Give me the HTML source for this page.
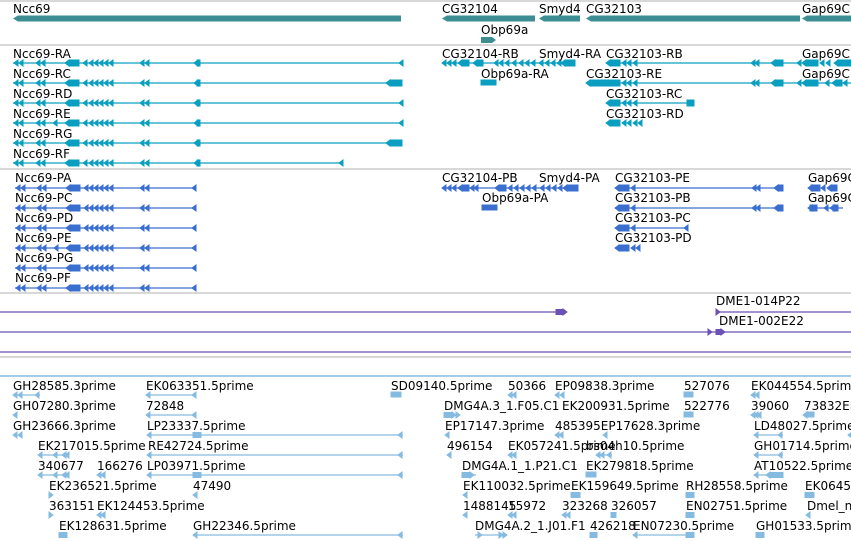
<!DOCTYPE html>
<html><head><meta charset="utf-8"><style>
html,body{margin:0;padding:0;background:#fff;width:851px;height:541px;overflow:hidden}
svg{display:block}
text{font-family:"DejaVu Sans","Liberation Sans",sans-serif;font-size:12px;fill:#000}
</style></head><body>
<svg width="851" height="541" viewBox="0 0 851 541">
<defs>
<polygon id="L" points="0,0 4,-3 4,3"/>
<polygon id="R" points="4,0 0,-3 0,3"/>
<g id="ncc">
<line x1="13" y1="0" x2="402" y2="0" stroke-width="1.2"/>
<use href="#L" x="14"/><use href="#L" x="19"/><use href="#L" x="36"/><use href="#L" x="41"/>
<use href="#L" x="65"/><rect x="69" y="-3" width="10" height="6"/>
<use href="#L" x="83"/><use href="#L" x="89"/><use href="#L" x="94"/><use href="#L" x="99"/><use href="#L" x="104"/><use href="#L" x="109"/>
<use href="#L" x="140"/><use href="#L" x="145"/>
<use href="#L" x="194"/><rect x="197" y="-3" width="3" height="6"/>
</g>
<g id="nccp">
<line x1="15" y1="0" x2="196" y2="0" stroke-width="1.2"/>
<use href="#L" x="16"/><use href="#L" x="21"/><use href="#L" x="37"/><use href="#L" x="42"/>
<use href="#L" x="66"/><rect x="70" y="-3" width="10" height="6"/>
<use href="#L" x="84"/><use href="#L" x="89"/><use href="#L" x="94"/><use href="#L" x="99"/><use href="#L" x="104"/><use href="#L" x="109"/>
<use href="#L" x="140"/><use href="#L" x="145"/>
<use href="#L" x="192"/>
</g>
</defs>
<g stroke="#c0c0c0" stroke-width="1.2">
<line x1="0" y1="1" x2="851" y2="1"/><line x1="0" y1="45" x2="851" y2="45"/>
<line x1="0" y1="169" x2="851" y2="169"/><line x1="0" y1="293" x2="851" y2="293"/>
<line x1="0" y1="357" x2="851" y2="357"/>
</g>
<line x1="0" y1="376" x2="851" y2="376" stroke="#86bbe1" stroke-width="1.5"/>

<g fill="#3d8e93">
<polygon points="13,18.5 18,15.5 401,15.5 401,21.5 18,21.5"/>
<polygon points="442,18.5 447,15.5 535,15.5 535,21.5 447,21.5"/>
<polygon points="539,18.5 544,15.5 580,15.5 580,21.5 544,21.5"/>
<polygon points="586,18.5 591,15.5 800,15.5 800,21.5 591,21.5"/>
<polygon points="802,18.5 807,15.5 851,15.5 851,21.5 807,21.5"/>
<polygon points="481,37 492,37 496,40 492,43 481,43"/>
</g>
<text x="13" y="13">Ncc69</text><text x="442" y="13">CG32104</text><text x="539" y="13">Smyd4</text><text x="586" y="13">CG32103</text><text x="802" y="13">Gap69C</text>
<text x="481" y="34">Obp69a</text>

<g fill="#0a9fc0" stroke="#0a9fc0">
<use href="#ncc" y="63"/><use href="#L" x="399" y="63"/>
<use href="#ncc" y="83"/><rect x="390" y="80" width="12" height="6"/><use href="#L" x="386" y="83"/>
<use href="#ncc" y="103"/><use href="#L" x="399" y="103"/>
<use href="#ncc" y="123"/><use href="#L" x="399" y="123"/><use href="#L" x="53" y="123"/>
<use href="#ncc" y="143"/><rect x="390" y="140" width="12" height="6"/><use href="#L" x="386" y="143"/>
<g><line x1="13" y1="163" x2="343" y2="163" stroke-width="1.2"/>
<use href="#L" x="14" y="163"/><use href="#L" x="19" y="163"/><use href="#L" x="36" y="163"/><use href="#L" x="41" y="163"/><use href="#L" x="65" y="163"/><rect x="69" y="160" width="10" height="6"/><use href="#L" x="83" y="163"/><use href="#L" x="89" y="163"/><use href="#L" x="94" y="163"/><use href="#L" x="99" y="163"/><use href="#L" x="104" y="163"/><use href="#L" x="109" y="163"/><use href="#L" x="140" y="163"/><use href="#L" x="145" y="163"/><use href="#L" x="194" y="163"/><rect x="197" y="160" width="3" height="6"/><use href="#L" x="339" y="163"/></g>
<line x1="442" y1="63" x2="575" y2="63" stroke-width="1.2"/>
<use href="#L" x="442" y="63"/><use href="#L" x="447" y="63"/><use href="#L" x="452" y="63"/><rect x="462" y="60" width="7" height="6"/><use href="#L" x="458" y="63"/><rect x="477" y="60" width="6" height="6"/><use href="#L" x="473" y="63"/>
<use href="#L" x="494" y="63"/><use href="#L" x="499" y="63"/><use href="#L" x="505" y="63"/><use href="#L" x="512" y="63"/><use href="#L" x="519" y="63"/><use href="#L" x="525" y="63"/><use href="#L" x="531" y="63"/>
<use href="#L" x="539" y="63"/><use href="#L" x="545" y="63"/><use href="#L" x="551" y="63"/><use href="#L" x="557" y="63"/><rect x="565" y="60" width="10" height="6"/><use href="#L" x="561" y="63"/>
<rect x="481" y="80" width="15" height="5"/>
<line x1="606" y1="63" x2="800" y2="63" stroke-width="1.2"/>
<rect x="610" y="60" width="10" height="6"/><use href="#L" x="606" y="63"/><use href="#L" x="622" y="63"/><use href="#L" x="627" y="63"/><use href="#L" x="633" y="63"/>
<use href="#L" x="751" y="63"/><use href="#L" x="755" y="63"/><rect x="775" y="60" width="8" height="6"/><use href="#L" x="771" y="63"/><use href="#L" x="797" y="63"/>
<rect x="806" y="60" width="12" height="6"/><use href="#L" x="802" y="63"/><use href="#L" x="820" y="63"/><use href="#L" x="826" y="63"/><use href="#L" x="834" y="63"/><rect x="838" y="60" width="13" height="6"/>
<line x1="586" y1="83" x2="851" y2="83" stroke-width="1.2"/>
<rect x="590" y="80" width="30" height="6"/><use href="#L" x="586" y="83"/><use href="#L" x="622" y="83"/><use href="#L" x="627" y="83"/><use href="#L" x="633" y="83"/>
<use href="#L" x="751" y="83"/><use href="#L" x="755" y="83"/><rect x="775" y="80" width="8" height="6"/><use href="#L" x="771" y="83"/><use href="#L" x="797" y="83"/>
<rect x="806" y="80" width="12" height="6"/><use href="#L" x="802" y="83"/><use href="#L" x="825" y="83"/><use href="#L" x="832" y="83"/><rect x="836" y="80" width="6" height="6"/><use href="#L" x="843" y="83"/>
<line x1="606" y1="103" x2="693" y2="103" stroke-width="1.2"/>
<rect x="610" y="100" width="10" height="6"/><use href="#L" x="606" y="103"/><use href="#L" x="622" y="103"/><use href="#L" x="627" y="103"/><use href="#L" x="633" y="103"/><rect x="687" y="100" width="7" height="6"/>
<rect x="610" y="120" width="10" height="6"/><use href="#L" x="606" y="123"/><use href="#L" x="622" y="123"/><use href="#L" x="627" y="123"/><use href="#L" x="633" y="123"/><use href="#L" x="638" y="123"/>
</g>
<g>
<text x="13" y="58">Ncc69-RA</text><text x="13" y="78">Ncc69-RC</text><text x="13" y="98">Ncc69-RD</text><text x="13" y="118">Ncc69-RE</text><text x="13" y="138">Ncc69-RG</text><text x="13" y="158">Ncc69-RF</text>
<text x="442" y="58">CG32104-RB</text><text x="539" y="58">Smyd4-RA</text><text x="606" y="58">CG32103-RB</text><text x="802" y="58">Gap69C</text>
<text x="481" y="78">Obp69a-RA</text><text x="586" y="78">CG32103-RE</text><text x="802" y="78">Gap69C</text>
<text x="606" y="98">CG32103-RC</text><text x="606" y="118">CG32103-RD</text>
</g>

<g fill="#3a6fd0" stroke="#3a6fd0">
<use href="#nccp" y="188"/><use href="#nccp" y="208"/><use href="#nccp" y="228"/><use href="#nccp" y="248"/><use href="#L" x="54" y="248"/><use href="#nccp" y="268"/><use href="#nccp" y="288"/>
<line x1="442" y1="188" x2="578" y2="188" stroke-width="1.2"/>
<use href="#L" x="442" y="188"/><use href="#L" x="447" y="188"/><use href="#L" x="452" y="188"/><rect x="462" y="185" width="7" height="6"/><use href="#L" x="458" y="188"/><use href="#L" x="470" y="188"/><use href="#L" x="474" y="188"/>
<use href="#L" x="495" y="188"/><rect x="500" y="185" width="6" height="6"/><use href="#L" x="508" y="188"/><use href="#L" x="514" y="188"/><use href="#L" x="520" y="188"/><use href="#L" x="526" y="188"/><use href="#L" x="532" y="188"/>
<use href="#L" x="540" y="188"/><use href="#L" x="546" y="188"/><use href="#L" x="552" y="188"/><use href="#L" x="558" y="188"/><rect x="567" y="185" width="11" height="6"/><use href="#L" x="563" y="188"/>
<rect x="482" y="205" width="15" height="5"/>
<line x1="615" y1="188" x2="783" y2="188" stroke-width="1.2"/><line x1="615" y1="208" x2="783" y2="208" stroke-width="1.2"/>
<rect x="620" y="185" width="9" height="6"/><use href="#L" x="615" y="188"/><use href="#L" x="631" y="188"/><use href="#L" x="752" y="188"/><use href="#L" x="756" y="188"/><rect x="778" y="185" width="5" height="6"/><use href="#L" x="774" y="188"/>
<rect x="620" y="205" width="9" height="6"/><use href="#L" x="615" y="208"/><use href="#L" x="631" y="208"/><use href="#L" x="752" y="208"/><use href="#L" x="756" y="208"/><rect x="778" y="205" width="5" height="6"/><use href="#L" x="774" y="208"/>
<line x1="615" y1="228" x2="688" y2="228" stroke-width="1.2"/>
<rect x="620" y="225" width="9" height="6"/><use href="#L" x="615" y="228"/><use href="#L" x="631" y="228"/><use href="#L" x="684" y="228"/>
<rect x="620" y="245" width="9" height="6"/><use href="#L" x="615" y="248"/><use href="#L" x="631" y="248"/><use href="#L" x="636" y="248"/>
<rect x="811" y="185" width="9" height="6"/><use href="#L" x="808" y="188"/><use href="#L" x="821" y="188"/><use href="#L" x="827" y="188"/><rect x="831" y="185" width="6" height="6"/>
<line x1="808" y1="208" x2="843" y2="208" stroke-width="1.2"/><rect x="810" y="205" width="7" height="6"/><use href="#L" x="808" y="208"/><use href="#L" x="824" y="208"/><use href="#L" x="830" y="208"/><rect x="833" y="205" width="5" height="6"/>
</g>
<g>
<text x="15" y="182">Ncc69-PA</text><text x="15" y="202">Ncc69-PC</text><text x="15" y="222">Ncc69-PD</text><text x="15" y="242">Ncc69-PE</text><text x="15" y="262">Ncc69-PG</text><text x="15" y="282">Ncc69-PF</text>
<text x="442" y="182">CG32104-PB</text><text x="539" y="182">Smyd4-PA</text><text x="615" y="182">CG32103-PE</text><text x="808" y="182">Gap69C</text>
<text x="482" y="202">Obp69a-PA</text><text x="615" y="202">CG32103-PB</text><text x="808" y="202">Gap69C</text>
<text x="615" y="222">CG32103-PC</text><text x="615" y="242">CG32103-PD</text>
</g>

<g fill="#6b50b5" stroke="#6b50b5">
<line x1="0" y1="312" x2="560" y2="312" stroke-width="1.3"/><rect x="556" y="309.5" width="7" height="5"/><use href="#R" x="563" y="312"/>
<line x1="717" y1="312" x2="851" y2="312" stroke-width="1.3"/><use href="#R" x="716" y="312"/>
<line x1="0" y1="332" x2="851" y2="332" stroke-width="1.3"/><use href="#R" x="708" y="332"/><rect x="716" y="329.5" width="5" height="5"/><use href="#R" x="721" y="332"/>
<line x1="0" y1="352" x2="851" y2="352" stroke-width="1.3"/>
</g>
<text x="716" y="305">DME1-014P22</text><text x="719" y="325">DME1-002E22</text>

<g fill="#86bbe1" stroke="#86bbe1">
<g stroke-width="1.2">
<line x1="13" y1="395" x2="40" y2="395"/><line x1="146" y1="395" x2="196" y2="395"/>
<line x1="146" y1="415" x2="196" y2="415"/><line x1="444" y1="415" x2="458" y2="415"/>
<line x1="147" y1="435" x2="403" y2="435"/><line x1="754" y1="435" x2="783" y2="435"/>
<line x1="38" y1="455" x2="68" y2="455"/><line x1="147" y1="455" x2="403" y2="455"/><line x1="596" y1="455" x2="612" y2="455"/><line x1="754" y1="455" x2="783" y2="455"/>
<line x1="38" y1="475" x2="68" y2="475"/><line x1="147" y1="475" x2="403" y2="475"/><line x1="462" y1="475" x2="476" y2="475"/><line x1="754" y1="475" x2="783" y2="475"/>
<line x1="193" y1="535" x2="403" y2="535"/><line x1="475" y1="535" x2="507" y2="535"/><line x1="633" y1="535" x2="693" y2="535"/>
</g>
<use href="#L" x="13" y="395"/><use href="#L" x="18" y="395"/><use href="#L" x="35" y="395"/><use href="#L" x="146" y="395"/><use href="#L" x="192" y="395"/><rect x="391" y="392" width="10" height="5"/><use href="#L" x="508" y="395"/><use href="#L" x="512" y="395"/><use href="#L" x="555" y="395"/><use href="#L" x="560" y="395"/><rect x="684" y="392" width="9" height="5"/><use href="#L" x="751" y="395"/><use href="#L" x="755" y="395"/>
<use href="#L" x="13" y="415"/><use href="#L" x="146" y="415"/><use href="#L" x="192" y="415"/><rect x="444" y="412.5" width="8" height="5"/><use href="#R" x="452" y="415"/><use href="#R" x="456" y="415"/><rect x="684" y="412" width="9" height="5"/><use href="#L" x="751" y="415"/><use href="#L" x="754" y="415"/><use href="#L" x="757" y="415"/><rect x="806" y="412" width="8" height="5"/><use href="#L" x="803" y="415"/>
<use href="#L" x="13" y="435"/><use href="#L" x="18" y="435"/><use href="#L" x="147" y="435"/><rect x="193" y="432.5" width="8" height="5"/><use href="#L" x="398" y="435"/><use href="#L" x="445" y="435"/><use href="#L" x="555" y="435"/><use href="#L" x="559" y="435"/><use href="#L" x="603" y="435"/><use href="#L" x="754" y="435"/><use href="#L" x="778" y="435"/><use href="#L" x="848" y="435"/>
<use href="#L" x="38" y="455"/><use href="#L" x="53" y="455"/><use href="#L" x="62" y="455"/><use href="#L" x="65" y="455"/><use href="#L" x="147" y="455"/><use href="#L" x="398" y="455"/><use href="#L" x="447" y="455"/><use href="#L" x="508" y="455"/><use href="#L" x="512" y="455"/><use href="#L" x="596" y="455"/><use href="#L" x="600" y="455"/><use href="#L" x="607" y="455"/><use href="#L" x="754" y="455"/><use href="#L" x="778" y="455"/>
<use href="#L" x="38" y="475"/><use href="#L" x="53" y="475"/><use href="#L" x="62" y="475"/><use href="#L" x="65" y="475"/><use href="#L" x="97" y="475"/><use href="#L" x="101" y="475"/><use href="#L" x="147" y="475"/><rect x="193" y="472.5" width="8" height="5"/><use href="#L" x="398" y="475"/><rect x="462" y="472.5" width="8" height="5"/><use href="#R" x="470" y="475"/><rect x="586" y="472" width="10" height="5"/><use href="#L" x="754" y="475"/><rect x="770" y="472.5" width="13" height="5"/><use href="#L" x="766" y="475"/>
<use href="#R" x="49" y="495"/><use href="#L" x="193" y="495"/><use href="#L" x="463" y="495"/><rect x="571" y="492.5" width="9" height="5"/><rect x="686" y="492.5" width="8" height="5"/><rect x="805" y="492.5" width="9" height="5"/>
<use href="#R" x="49" y="515"/><use href="#L" x="97" y="515"/><use href="#L" x="101" y="515"/><use href="#L" x="463" y="515"/><use href="#L" x="508" y="515"/><use href="#L" x="512" y="515"/><use href="#L" x="562" y="515"/><use href="#L" x="566" y="515"/><rect x="611" y="512.5" width="5" height="5"/><rect x="686" y="512.5" width="8" height="5"/><use href="#L" x="806" y="515"/>
<rect x="59" y="532.5" width="8" height="5"/><use href="#L" x="193" y="535"/><use href="#L" x="398" y="535"/><use href="#R" x="478" y="535"/><use href="#R" x="499" y="535"/><use href="#R" x="503" y="535"/><rect x="590" y="532.5" width="7" height="5"/><use href="#L" x="633" y="535"/><rect x="686" y="532.5" width="8" height="5"/><rect x="756" y="532.5" width="8" height="5"/>
</g>
<g>
<text x="13" y="390">GH28585.3prime</text><text x="146" y="390">EK063351.5prime</text><text x="391" y="390">SD09140.5prime</text><text x="508" y="390">50366</text><text x="555" y="390">EP09838.3prime</text><text x="684" y="390">527076</text><text x="751" y="390">EK044554.5prime</text>
<text x="13" y="410">GH07280.3prime</text><text x="146" y="410">72848</text><text x="444" y="410">DMG4A.3_1.F05.C1</text><text x="562" y="410">EK200931.5prime</text><text x="684" y="410">522776</text><text x="751" y="410">39060</text><text x="804" y="410">73832EK</text>
<text x="13" y="430">GH23666.3prime</text><text x="147" y="430">LP23337.5prime</text><text x="445" y="430">EP17147.3prime</text><text x="555" y="430">485395EP17628.3prime</text><text x="754" y="430">LD48027.5prime</text>
<text x="38" y="450">EK217015.5prime</text><text x="148" y="450">RE42724.5prime</text><text x="447" y="450">496154</text><text x="508" y="450">EK057241.5prime</text><text x="586" y="450">bs04h10.5prime</text><text x="754" y="450">GH01714.5prime</text>
<text x="38" y="470">340677</text><text x="97" y="470">166276</text><text x="147" y="470">LP03971.5prime</text><text x="462" y="470">DMG4A.1_1.P21.C1</text><text x="586" y="470">EK279818.5prime</text><text x="754" y="470">AT10522.5prime</text>
<text x="49" y="490">EK236521.5prime</text><text x="193" y="490">47490</text><text x="463" y="490">EK110032.5prime</text><text x="571" y="490">EK159649.5prime</text><text x="686" y="490">RH28558.5prime</text><text x="805" y="490">EK0645</text>
<text x="49" y="510">363151</text><text x="97" y="510">EK124453.5prime</text><text x="463" y="510">1488145</text><text x="508" y="510">15972</text><text x="562" y="510">323268</text><text x="611" y="510">326057</text><text x="686" y="510">EN02751.5prime</text><text x="807" y="510">Dmel_n</text>
<text x="59" y="530">EK128631.5prime</text><text x="193" y="530">GH22346.5prime</text><text x="475" y="530">DMG4A.2_1.J01.F1</text><text x="590" y="530">426218</text><text x="633" y="530">EN07230.5prime</text><text x="756" y="530">GH01533.5prime</text>
</g>
</svg>
</body></html>
